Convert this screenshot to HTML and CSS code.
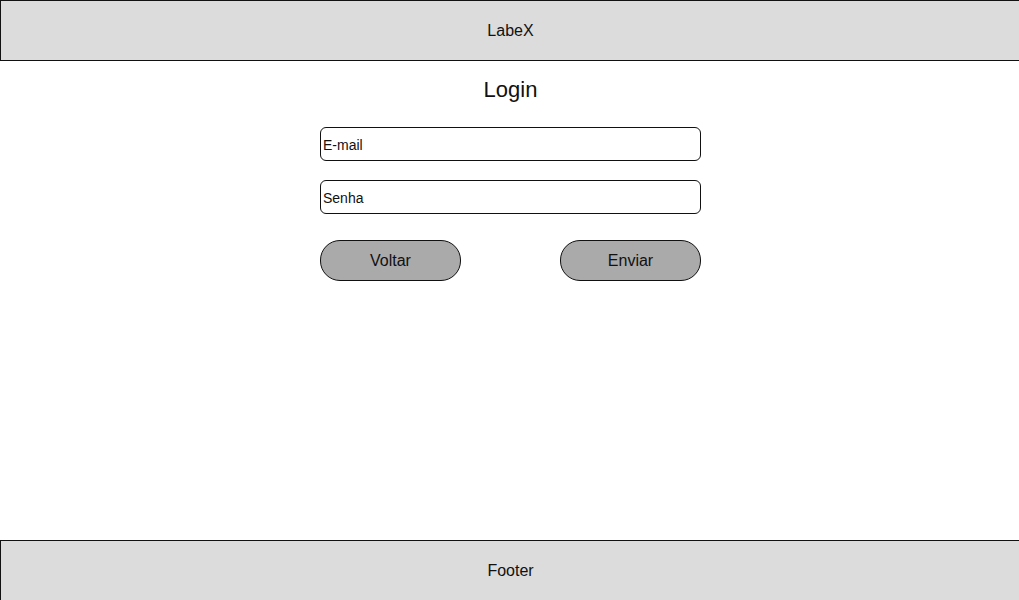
FILE: index.html
```html
<!DOCTYPE html>
<html lang="pt">
<head>
<meta charset="utf-8">
<title>LabeX - Login</title>
<link rel="stylesheet" href="styles.css">
</head>
<body>
<div class="page">
  <header class="header">LabeX</header>
  <main class="main">
    <h1 class="title">Login</h1>
    <form class="form">
      <input class="field" type="text" value="E-mail">
      <input class="field" type="text" value="Senha">
      <div class="actions">
        <button type="button" class="btn">Voltar</button>
        <button type="button" class="btn">Enviar</button>
      </div>
    </form>
  </main>
  <footer class="footer">Footer</footer>
</div>
</body>
</html>
```
FILE: styles.css
```css
html, body {
  margin: 0;
  padding: 0;
  background: #ffffff;
  overflow: hidden;
}
body {
  font-family: "Liberation Sans", Arial, sans-serif;
  color: #111111;
}
.page {
  width: 1021px;
  display: flex;
  flex-direction: column;
}
.header, .footer {
  box-sizing: border-box;
  width: 1021px;
  height: 61px;
  flex: none;
  background: #dcdcdc;
  border: 1px solid #111111;
  display: flex;
  align-items: center;
  justify-content: center;
  font-size: 16px;
}
.main {
  box-sizing: border-box;
  height: 479px;
  flex: none;
  display: flex;
  flex-direction: column;
  align-items: center;
  padding-top: 16px;
}
.title {
  margin: 0;
  font-size: 22px;
  font-weight: normal;
  line-height: 26px;
}
.form {
  margin-top: 24px;
  width: 381px;
  display: flex;
  flex-direction: column;
}
.field {
  box-sizing: border-box;
  width: 381px;
  height: 34px;
  margin: 0 0 19px 0;
  padding: 1px 2px 0 2px;
  border: 1px solid #111111;
  border-radius: 6px;
  background: #ffffff;
  font-family: "Liberation Sans", Arial, sans-serif;
  font-size: 14px;
  color: #111111;
  outline: none;
}
.actions {
  margin-top: 7px;
  display: flex;
  justify-content: space-between;
}
.btn {
  box-sizing: border-box;
  width: 141px;
  height: 41px;
  border: 1px solid #111111;
  border-radius: 20px;
  background: #aaaaaa;
  font-family: "Liberation Sans", Arial, sans-serif;
  font-size: 16px;
  color: #111111;
  padding: 0;
}
```
